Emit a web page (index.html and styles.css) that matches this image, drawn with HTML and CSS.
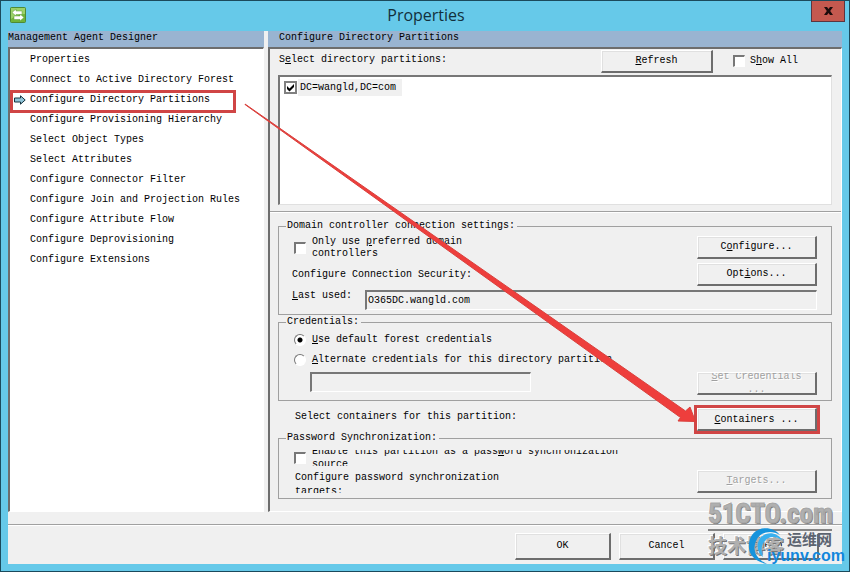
FILE: index.html
```html
<!DOCTYPE html>
<html lang="en">
<head>
    <meta charset="UTF-8">
    <meta name="viewport" content="width=device-width, initial-scale=1.0">
    <title>Properties</title>
    <link rel="stylesheet" href="styles.css">
</head>
<body>
    <div class="window">
        <header class="titlebar">
            <svg class="app-icon" width="16" height="16" viewBox="0 0 16 16">
                <rect x="0.5" y="0.5" width="15" height="15" rx="1" fill="#6fb43a" stroke="#4d8a35"/>
                <path d="M1 1h14v6q-7 0-14 5z" fill="#9bd169"/>
                <path d="M2 5.500l4-3.500v2h6v3.500H6V9z" fill="#fff" stroke="#5c9c38" stroke-width="0.5"/>
                <path d="M14 10.500l-4-3.500v2H4v3.500h6V14z" fill="#fff" stroke="#5c9c38" stroke-width="0.5"/>
            </svg>
            <h1>Properties</h1>
            <button type="button" class="close" aria-label="Close">
                <svg width="9" height="8" viewBox="0 0 9 8">
                    <path d="M0 0h3l1.500 2L6 0h3L6.200 4 9 8H6L4.500 6 3 8H0l2.800-4z" fill="#1c0c0c"/>
                </svg>
            </button>
        </header>

        <main class="client">
            <div class="columns">
                <nav class="designer">
                    <h2>Management Agent Designer</h2>
                    <ul class="pane steps">
                        <li><a href="#">Properties</a></li>
                        <li><a href="#">Connect to Active Directory Forest</a></li>
                        <li class="current">
                            <svg width="12" height="10" viewBox="0 0 12 10">
                                <path d="M0.500 3h6V0.800L11.200 5 6.500 9.200V7h-6z" fill="#8fc4d8" stroke="#16323e"/>
                            </svg>
                            <a href="#">Configure Directory Partitions</a>
                        </li>
                        <li><a href="#">Configure Provisioning Hierarchy</a></li>
                        <li><a href="#">Select Object Types</a></li>
                        <li><a href="#">Select Attributes</a></li>
                        <li><a href="#">Configure Connector Filter</a></li>
                        <li><a href="#">Configure Join and Projection Rules</a></li>
                        <li><a href="#">Configure Attribute Flow</a></li>
                        <li><a href="#">Configure Deprovisioning</a></li>
                        <li><a href="#">Configure Extensions</a></li>
                    </ul>
                </nav>

                <section class="details">
                    <h2>Configure Directory Partitions</h2>
                    <div class="pane form">
                        <div class="partitions">
                            <div class="partitions-head">
                                <span class="caption">S<u>e</u>lect directory partitions:</span>
                                <button type="button" class="btn refresh"><u>R</u>efresh</button>
                                <label class="check"><input type="checkbox"><span>S<u>h</u>ow All</span></label>
                            </div>
                            <div class="list">
                                <label class="list-item"><input type="checkbox" checked><span>DC=wangld,DC=com</span></label>
                            </div>
                        </div>

                        <div class="settings">
                            <fieldset class="connection">
                                <legend>Domain controller connection settings:</legend>
                                <label class="check"><input type="checkbox"><span>Only use <u>p</u>referred domain<br>controllers</span></label>
                                <button type="button" class="btn">C<u>o</u>nfigure...</button>
                                <span>Configure Connection Security:</span>
                                <button type="button" class="btn">Opt<u>i</u>ons...</button>
                                <div class="last-used">
                                    <label for="last-used"><u>L</u>ast used:</label>
                                    <input type="text" id="last-used" class="field" value="O365DC.wangld.com" readonly>
                                </div>
                            </fieldset>

                            <fieldset class="credentials">
                                <legend>Credentials:</legend>
                                <label class="check"><input type="radio" name="cred" checked><span><u>U</u>se default forest credentials</span></label>
                                <label class="check"><input type="radio" name="cred"><span><u>A</u>lternate credentials for this directory partition</span></label>
                                <div class="alternate">
                                    <input type="text" class="field" aria-label="Alternate credentials" disabled>
                                    <button type="button" class="btn two-line" disabled><span><u>S</u>et Credentials<br>...</span></button>
                                </div>
                            </fieldset>

                            <div class="containers">
                                <span>Select containers for this partition:</span>
                                <button type="button" class="btn marked"><u>C</u>ontainers ...</button>
                            </div>

                            <fieldset class="password">
                                <legend>Password Synchronization:</legend>
                                <label class="check clipped"><input type="checkbox"><span>Enable this partition as a pass<u>w</u>ord synchronization<br>source</span></label>
                                <div class="targets">
                                    <span>Configure password synchronization<br>targets:</span>
                                    <button type="button" class="btn" disabled><u>T</u>argets...</button>
                                </div>
                            </fieldset>
                        </div>
                    </div>
                </section>
            </div>

            <footer class="actions">
                <button type="button" class="btn">OK</button>
                <button type="button" class="btn">Cancel</button>
                <button type="button" class="btn">Help</button>
            </footer>
        </main>

        <svg class="arrow" width="850" height="572" viewBox="0 0 850 572">
            <path d="M245 104L685.500 411L690 407L695.500 421.500L678 421L680.500 417.500L245 104.500z" fill="#ee3e3c" stroke="#d9413d" stroke-width="1"/>
        </svg>

        <div class="blog-mark">
            <strong>51CTO.com</strong>
            <span>技术博客</span>
        </div>
        <div class="site-mark">
            <svg width="40" height="40" viewBox="0 0 40 40">
                <path d="M33 9C25-1 8 0 3 13c-4 12 2 22 17 25C9 33 5 24 9 15 13 6 24 3 33 9z" fill="#1593dc"/>
                <path d="M36 15C30 5 17 5 12 14c-3 7-1 13 4 17-2-6-2-11 1-15 4-6 12-7 19-1z" fill="#39b0ee"/>
            </svg>
            <span class="site-name">运维网</span>
            <strong>iyunv.com</strong>
        </div>
    </div>
</body>
</html>
```
FILE: styles.css
```css
* {
    box-sizing: border-box;
}

body {
    margin: 0;
    font-family: 'Liberation Mono', 'Noto Sans CJK SC', monospace;
    font-size: 10px;
    line-height: 12px;
    color: #000;
}

u {
    text-underline-offset: 1px;
}

.window {
    position: relative;
    display: flex;
    flex-direction: column;
    min-height: 100vh;
    padding: 0 7px 7px;
    border: 1px solid #1b4a5c;
    background-color: #66c9e9;
    overflow: hidden;
}

.titlebar {
    display: grid;
    grid-template-columns: 1fr auto 1fr;
    height: 30px;
    padding-left: 2px;
}

.app-icon {
    margin-top: 6px;
}

.titlebar h1 {
    margin: 0;
    font-family: 'Open Sans', 'Noto Sans', sans-serif;
    font-size: 16px;
    font-weight: normal;
    line-height: 28px;
    color: #12303c;
}

.close {
    display: flex;
    justify-content: center;
    align-items: center;
    justify-self: end;
    width: 34px;
    height: 21px;
    margin-right: -3px;
    padding: 0;
    border: 1px solid #5c3540;
    border-top: none;
    background-color: #c4594f;
}

.client {
    display: flex;
    flex: 1;
    flex-direction: column;
    background-color: #f0f0f0;
}

.columns {
    display: grid;
    flex: 1;
    grid-template-columns: 256px 1fr;
    column-gap: 4px;
}

.designer,
.details {
    display: flex;
    flex-direction: column;
    min-width: 0;
}

h2 {
    height: 16px;
    margin: 0;
    font-size: 10px;
    font-weight: normal;
    line-height: 14px;
    background-color: #99b4d1;
}

.details h2 {
    padding-left: 11px;
}

.pane {
    flex: 1;
    border: 2px solid #6d6d6d;
    border-right: 1px solid #fff;
    border-bottom: 1px solid #fff;
}

/* left list */
.steps {
    margin: 0;
    padding: 1px 0 0;
    list-style: none;
    background-color: #fff;
}

.steps li {
    position: relative;
    display: flex;
    align-items: center;
    height: 20px;
    padding-left: 20px;
}

.steps a {
    color: inherit;
    text-decoration: none;
}

.steps svg {
    margin-left: -16px;
    margin-right: 4px;
}

.current::after {
    content: '';
    position: absolute;
    top: 0;
    left: 0;
    box-sizing: border-box;
    width: 226px;
    height: 23px;
    border: 3px solid #d04545;
}

/* controls */
.btn {
    width: 120px;
    height: 23px;
    padding: 0;
    border: 2px solid #6d6d6d;
    border-top: 1px solid #fff;
    border-left: 1px solid #fff;
    box-shadow: inset 1px 1px #e0e0e0;
    background-color: #f0f0f0;
    font: inherit;
    color: #000;
    text-align: center;
}

.btn:disabled {
    color: #a0a0a0;
    text-shadow: 1px 1px #fff;
}

.check {
    display: flex;
    align-items: center;
    gap: 6px;
}

input[type="checkbox"],
input[type="radio"] {
    flex: none;
    appearance: none;
    width: 12px;
    height: 12px;
    margin: 0;
    border: 2px solid #777;
    border-right: 1px solid #fff;
    border-bottom: 1px solid #fff;
    background-color: #fff;
}

input[type="radio"] {
    border-width: 1px;
    border-radius: 50%;
}

input[type="radio"]:checked {
    background-image: radial-gradient(circle, #000 2px, #fff 3px);
}

.field {
    height: 20px;
    padding: 0 1px;
    border: 2px solid #777;
    border-right: 1px solid #fff;
    border-bottom: 1px solid #fff;
    background-color: #f0f0f0;
    font: inherit;
    color: #000;
}

/* partition list */
.form {
    display: flex;
    flex-direction: column;
}

.partitions {
    display: flex;
    flex: 1;
    flex-direction: column;
    padding: 1px 9px 6px 8px;
    border-bottom: 1px solid #a0a0a0;
}

.partitions-head {
    display: flex;
    align-items: flex-start;
}

.caption {
    margin: 4px auto 0 1px;
}

.refresh {
    width: 112px;
}

.partitions-head .check {
    gap: 5px;
    margin: 5px 34px 0 20px;
}

.list {
    flex: 1;
    min-height: 120px;
    margin-top: 2px;
    padding: 2px 4px;
    border: 2px solid #777;
    border-right: 1px solid #e0e0e0;
    border-bottom: 1px solid #e0e0e0;
    background-color: #fff;
}

.list-item {
    display: inline-flex;
    align-items: center;
    gap: 1px;
}

.list-item input[type="checkbox"] {
    width: 13px;
    height: 13px;
    border: 2px solid #808080;
    background: url("data:image/svg+xml,%3Csvg xmlns='http://www.w3.org/2000/svg' viewBox='0 0 9 9'%3E%3Cpath d='M1 3l2.500 2.500L8 1v3L3.500 8.500 1 6z'/%3E%3C/svg%3E") center / 9px no-repeat #fff;
}

.list-item span {
    padding: 0 6px 0 2px;
    line-height: 17px;
    background-color: #f0f0f0;
}

/* settings */
.settings {
    padding: 7px 9px 12px 8px;
    border-top: 1px solid #fff;
}

fieldset {
    min-width: 0;
    margin: 0 0 1px;
    padding: 4px 14px 5px 13px;
    border: 1px solid #a0a0a0;
}

legend {
    margin-left: -6px;
    padding: 0 2px 0 1px;
}

.connection {
    display: grid;
    grid-template-columns: 1fr 120px;
    grid-auto-rows: 23px;
    gap: 4px;
    align-items: center;
    padding-bottom: 1px;
}

.connection .check,
.credentials .check,
.password .check {
    margin-left: 2px;
}

.last-used {
    display: flex;
    grid-column: span 2;
    align-self: start;
}

.last-used label {
    width: 73px;
}

.last-used .field {
    flex: 1;
}

.credentials .check {
    height: 16px;
    margin-bottom: 4px;
}

.alternate {
    display: flex;
    justify-content: space-between;
    align-items: flex-start;
    padding-left: 18px;
}

.alternate .field {
    width: 221px;
}

.two-line {
    display: flex;
    justify-content: center;
    align-items: center;
    line-height: 13px;
    overflow: hidden;
}

.containers {
    display: flex;
    justify-content: space-between;
    margin: 7px 15px 1px 17px;
    line-height: 17px;
}

.marked {
    outline: 3px solid #d04545;
}

.password {
    margin-bottom: 0;
    padding-top: 6px;
}

.clipped {
    height: 16px;
    margin-bottom: 4px;
    line-height: 13px;
    overflow: hidden;
}

.targets {
    display: flex;
    justify-content: space-between;
    height: 23px;
    padding-left: 3px;
}

.targets span {
    height: 23px;
    padding-top: 1px;
    line-height: 14px;
    overflow: hidden;
}

/* footer */
.actions {
    display: flex;
    justify-content: flex-end;
    gap: 8px;
    margin-top: 12px;
    padding: 8px 23px 4px 0;
    border-top: 1px solid #a0a0a0;
    box-shadow: inset 0 1px #fff;
}

.actions .btn {
    width: 96px;
    height: 27px;
}

/* overlays */
.arrow {
    position: absolute;
    top: -1px;
    left: -1px;
    pointer-events: none;
}

.blog-mark,
.site-mark {
    position: absolute;
    pointer-events: none;
}

.blog-mark {
    right: 17px;
    bottom: 12px;
    width: 124px;
    color: #b0b0b0;
    text-shadow: 1px 1px #777, -1px -1px #fff;
}

.blog-mark strong {
    display: block;
    border-bottom: 2px solid #858585;
    font-family: 'Liberation Sans Narrow', 'Roboto Condensed', 'Liberation Sans', sans-serif;
    font-size: 27px;
    line-height: 29px;
    -webkit-text-stroke: 1px #a6a6a6;
}

.blog-mark span {
    font-family: 'Noto Sans CJK SC', sans-serif;
    font-size: 19px;
    font-weight: bold;
    line-height: 28px;
}

.site-mark {
    right: 4px;
    bottom: 6px;
    display: grid;
    grid-template-columns: 20px auto;
    width: 98px;
}

.site-mark svg {
    position: absolute;
    top: -4px;
    left: 0;
}

.site-name {
    position: relative;
    grid-column: 2;
    padding-left: 20px;
    font-family: 'Noto Sans CJK SC', sans-serif;
    font-size: 15px;
    font-weight: bold;
    line-height: 17px;
    color: #5c6470;
}

.site-mark strong {
    position: relative;
    grid-column: 2;
    font-family: 'Liberation Sans', sans-serif;
    font-size: 16px;
    line-height: 18px;
    color: #1287dc;
}
```
